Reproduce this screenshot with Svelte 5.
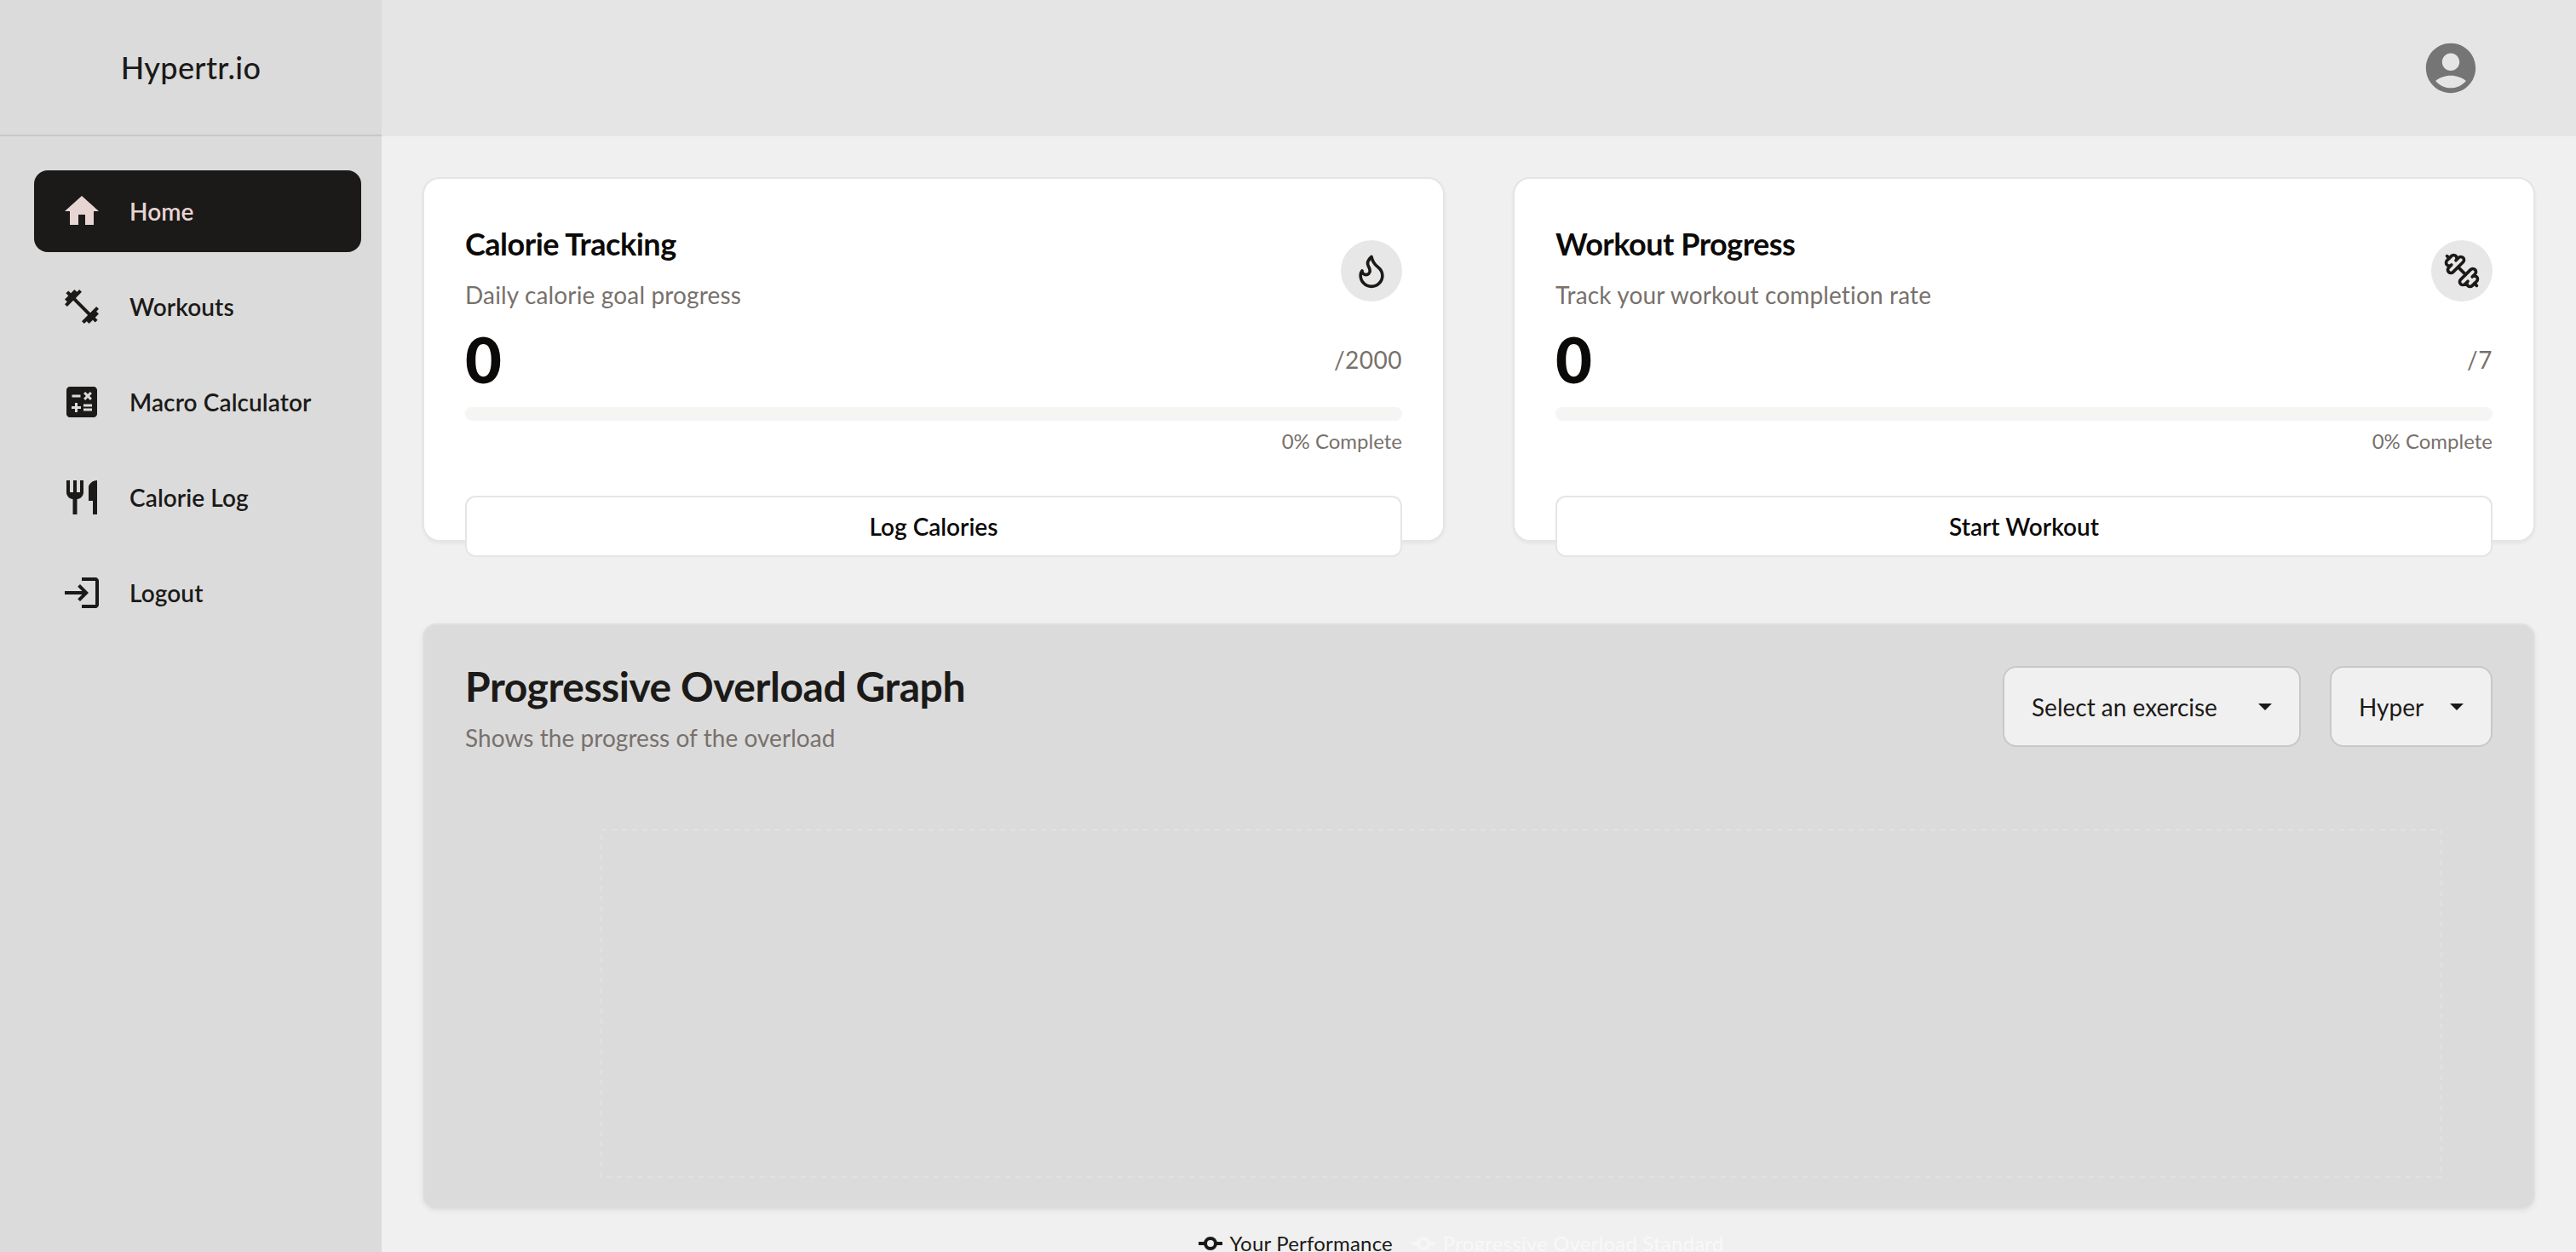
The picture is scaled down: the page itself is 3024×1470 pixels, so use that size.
<script>
    const navItems = [
        { label: "Home", active: true, d: "M10 20v-6h4v6h5v-8h3L12 3 2 12h3v8z" },
        { label: "Workouts", d: "M20.57 14.86L22 13.43 20.57 12 17 15.57 8.43 7 12 3.43 10.57 2 9.14 3.43 7.71 2 5.57 4.14 4.14 2.71 2.71 4.14l1.43 1.43L2 7.71l1.43 1.43L2 10.57 3.43 12 7 8.43 15.57 17 12 20.57 13.43 22l1.43-1.43L16.29 22l2.14-2.14 1.43 1.43 1.43-1.43-1.43-1.43L22 16.29z" },
        { label: "Macro Calculator", d: "M19 3H5c-1.1 0-2 .9-2 2v14c0 1.1.9 2 2 2h14c1.1 0 2-.9 2-2V5c0-1.1-.9-2-2-2zm-5.97 4.06L14.09 6l1.41 1.41L16.91 6l1.06 1.06-1.41 1.41 1.41 1.41-1.06 1.06-1.41-1.4-1.41 1.41-1.06-1.06 1.41-1.41-1.41-1.42zm-6.78.66h5v1.5h-5v-1.5zM11.5 16h-2v2H8v-2H6v-1.5h2v-2h1.5v2h2V16zm6.5 1.25h-5v-1.5h5v1.5zm0-2.5h-5v-1.5h5v1.5z" },
        { label: "Calorie Log", d: "M11 9H9V2H7v7H5V2H3v7c0 2.12 1.66 3.84 3.75 3.97V22h2.5v-9.03C11.34 12.84 13 11.12 13 9V2h-2v7zm5-3v8h2.5v8H21V2c-2.76 0-5 2.24-5 4z" },
        { label: "Logout", d: "M11 7L9.6 8.4l2.6 2.6H2v2h10.2l-2.6 2.6L11 17l5-5-5-5zm9 12h-8v2h8c1.1 0 2-.9 2-2V5c0-1.1-.9-2-2-2h-8v2h8v14z" },
    ];

    const flame = ["M8.5 14.5A2.5 2.5 0 0 0 11 12c0-1.38-.5-2-1-3-1.072-2.143-.224-4.054 2-6 .5 2.5 2 4.9 4 6.5 2 1.6 3 3.5 3 5.5a7 7 0 1 1-14 0c0-1.153.433-2.294 1-3a2.5 2.5 0 0 0 2.5 2.5z"];
    const dumbbell = [
        "M14.4 14.4 9.6 9.6",
        "M18.657 21.485a2 2 0 1 1-2.829-2.828l-1.767 1.768a2 2 0 1 1-2.829-2.829l6.364-6.364a2 2 0 1 1 2.829 2.829l-1.768 1.767a2 2 0 1 1 2.828 2.829z",
        "m21.5 21.5-1.4-1.4",
        "M3.9 3.9 2.5 2.5",
        "M6.404 12.768a2 2 0 1 1-2.829-2.829l1.768-1.767a2 2 0 1 1-2.828-2.829l2.828-2.828a2 2 0 1 1 2.829 2.828l1.767-1.768a2 2 0 1 1 2.829 2.829z",
    ];

    const cards = [
        { title: "Calorie Tracking", sub: "Daily calorie goal progress", goal: "/2000", action: "Log Calories", icon: flame },
        { title: "Workout Progress", sub: "Track your workout completion rate", goal: "/7", action: "Start Workout", icon: dumbbell },
    ];
</script>

<div class="layout">
    <aside class="sidebar">
        <div class="brand">Hypertr.io</div>
        <nav class="nav">
            {#each navItems as item}
                <a class="nav-item" class:active={item.active} href="#top">
                    <svg class="nav-icon" viewBox="0 0 24 24" fill="currentColor"><path d={item.d} /></svg>
                    <span>{item.label}</span>
                </a>
            {/each}
        </nav>
    </aside>

    <div class="main">
        <header class="topbar">
            <svg class="avatar" viewBox="0 0 24 24" fill="#757575">
                <path d="M12 2C6.48 2 2 6.48 2 12s4.48 10 10 10 10-4.48 10-10S17.52 2 12 2zm0 4c1.93 0 3.5 1.57 3.5 3.5S13.93 13 12 13s-3.5-1.57-3.5-3.5S10.07 6 12 6zm0 14c-2.03 0-4.43-.82-6.14-2.88C7.55 15.8 9.68 15 12 15s4.45.8 6.14 2.12C16.43 19.18 14.03 20 12 20z" />
            </svg>
        </header>

        <div class="content">
            <div class="cards">
                {#each cards as card}
                    <section class="card">
                        <div class="card-head">
                            <div>
                                <h3 class="card-title">{card.title}</h3>
                                <p class="card-sub">{card.sub}</p>
                            </div>
                            <div class="icon-circle">
                                <svg viewBox="0 0 24 24" fill="none" stroke="#1c1917" stroke-width="2" stroke-linecap="round" stroke-linejoin="round">
                                    {#each card.icon as d}
                                        <path {d} />
                                    {/each}
                                </svg>
                            </div>
                        </div>
                        <div class="stat">
                            <span class="value">0</span>
                            <span class="goal">{card.goal}</span>
                        </div>
                        <div class="track"></div>
                        <div class="percent">0% Complete</div>
                        <button class="action">{card.action}</button>
                    </section>
                {/each}
            </div>

            <section class="panel">
                <div class="panel-head">
                    <div>
                        <h2 class="panel-title">Progressive Overload Graph</h2>
                        <p class="panel-sub">Shows the progress of the overload</p>
                    </div>
                    <div class="selects">
                        <div class="select exercise">
                            <span>Select an exercise</span>
                            <i class="caret"></i>
                        </div>
                        <div class="select mode">
                            <span>Hyper</span>
                            <i class="caret"></i>
                        </div>
                    </div>
                </div>

                <svg class="chart" width="2380" height="440">
                    <rect x="160" y="14" width="2160" height="408" fill="none" stroke="#e2e2e2" stroke-width="2" stroke-dasharray="6 6" />
                </svg>

                <div class="legend">
                    <div class="legend-item">
                        <svg width="28" height="28" viewBox="0 0 28 28" fill="#f0f0f0" stroke="#1b1a18" stroke-width="4">
                            <path d="M0 14h28" />
                            <circle cx="14" cy="14" r="6" />
                        </svg>
                        <span>Your Performance</span>
                    </div>
                    <div class="legend-item ghost">
                        <svg width="28" height="28" viewBox="0 0 28 28" fill="#f0f0f0" stroke="#f6f6f6" stroke-width="4">
                            <path d="M0 14h28" />
                            <circle cx="14" cy="14" r="6" />
                        </svg>
                        <span>Progressive Overload Standard</span>
                    </div>
                </div>
            </section>
        </div>
    </div>
</div>

<style>
    :global(body) {
        overflow: hidden;
        font-family: "Lato", "Noto Sans", sans-serif;
        color: #1b1a18;
    }

    .layout {
        display: flex;
        height: 1470px;
        overflow: hidden;
        background: #f0f0f0;
    }

    .sidebar {
        width: 448px;
        flex-shrink: 0;
        background: #dbdbdb;
    }

    .brand {
        height: 158px;
        border-bottom: 2px solid #c8c8c8;
        display: flex;
        align-items: center;
        justify-content: center;
        font-size: 36px;
        font-weight: 500;
        letter-spacing: 0.01em;
    }

    .nav {
        display: flex;
        flex-direction: column;
        gap: 16px;
        padding: 40px 24px 0 40px;
    }

    .nav-item {
        display: flex;
        align-items: center;
        gap: 32px;
        height: 96px;
        padding-left: 32px;
        border-radius: 16px;
        color: #1b1a18;
        font-size: 28px;
        font-weight: 600;
        letter-spacing: 0.1px;
        text-decoration: none;
    }

    .nav-item.active {
        background: #1b1a18;
        color: #e7d5d3;
    }

    .nav-icon {
        width: 48px;
        height: 48px;
    }

    .main {
        flex: 1;
        min-width: 0;
    }

    .topbar {
        height: 160px;
        background: #e5e5e5;
        display: flex;
        align-items: center;
        justify-content: flex-end;
        padding-right: 112px;
    }

    .avatar {
        width: 70px;
        height: 70px;
    }

    .content {
        padding: 48px;
        display: flex;
        flex-direction: column;
        gap: 96px;
    }

    .cards {
        display: grid;
        grid-template-columns: 1fr 1fr;
        gap: 80px;
    }

    .card {
        box-sizing: border-box;
        height: 428px;
        padding: 48px;
        background: #fff;
        border: 2px solid #e5e5e5;
        border-radius: 20px;
        box-shadow: 0 2px 4px rgba(0, 0, 0, 0.05);
    }

    .card-head {
        display: flex;
        align-items: center;
        justify-content: space-between;
    }

    .card-title {
        margin: 0;
        font-size: 36px;
        line-height: 56px;
        font-weight: 700;
        letter-spacing: -0.5px;
        color: #0c0a09;
    }

    .card-sub {
        margin: 12px 0 0;
        font-size: 28px;
        line-height: 40px;
        letter-spacing: 0.15px;
        color: #78716c;
    }

    .icon-circle {
        width: 72px;
        height: 72px;
        margin-top: 12px;
        border-radius: 50%;
        background: #e7e7e7;
        display: flex;
        align-items: center;
        justify-content: center;
    }

    .icon-circle svg {
        width: 44px;
        height: 44px;
    }

    .stat {
        display: flex;
        align-items: center;
        justify-content: space-between;
        margin-top: 16px;
    }

    .value {
        font-size: 74px;
        line-height: 80px;
        font-weight: 900;
        color: #0c0a09;
    }

    .goal {
        font-size: 28px;
        letter-spacing: 0.5px;
        color: #78716c;
    }

    .track {
        height: 16px;
        margin-top: 16px;
        border-radius: 8px;
        background: #f5f5f4;
    }

    .percent {
        margin-top: 8px;
        text-align: right;
        font-size: 24px;
        line-height: 32px;
        color: #78716c;
    }

    .action {
        display: block;
        box-sizing: border-box;
        width: 100%;
        height: 72px;
        margin-top: 48px;
        background: #fff;
        border: 2px solid #e7e5e4;
        border-radius: 12px;
        font-family: inherit;
        font-size: 28px;
        font-weight: 600;
        color: #0c0a09;
    }

    .panel {
        box-sizing: border-box;
        height: 688px;
        padding: 48px;
        background: #dbdbdb;
        border: 2px solid #e0e0e0;
        border-radius: 16px;
        box-shadow: 0 2px 6px rgba(0, 0, 0, 0.06);
    }

    .panel-head {
        display: flex;
        justify-content: space-between;
        align-items: flex-start;
    }

    .panel-title {
        margin: 0;
        font-size: 48px;
        line-height: 48px;
        font-weight: 700;
        letter-spacing: -0.45px;
    }

    .panel-sub {
        margin: 16px 0 0;
        font-size: 28px;
        line-height: 40px;
        letter-spacing: 0.05px;
        color: #78716c;
    }

    .selects {
        display: flex;
        gap: 34px;
    }

    .select {
        box-sizing: border-box;
        height: 95px;
        padding: 0 32px;
        display: flex;
        align-items: center;
        justify-content: space-between;
        background: #f0f0f0;
        border: 2px solid #c8c8c8;
        border-radius: 16px;
        font-size: 28px;
    }

    .exercise {
        width: 350px;
    }

    .mode {
        width: 191px;
    }

    .caret {
        width: 0;
        height: 0;
        border-left: 8px solid transparent;
        border-right: 8px solid transparent;
        border-top: 8px solid #1b1a18;
    }

    .chart {
        display: block;
        margin-top: 74px;
    }

    .legend {
        display: flex;
        justify-content: center;
        gap: 22px;
        margin-top: 44px;
        padding-right: 42px;
        font-size: 24px;
        line-height: 32px;
        letter-spacing: 0.2px;
    }

    .legend-item {
        display: flex;
        align-items: center;
        gap: 9px;
    }

    .ghost {
        color: #f8f8f8;
    }
</style>
